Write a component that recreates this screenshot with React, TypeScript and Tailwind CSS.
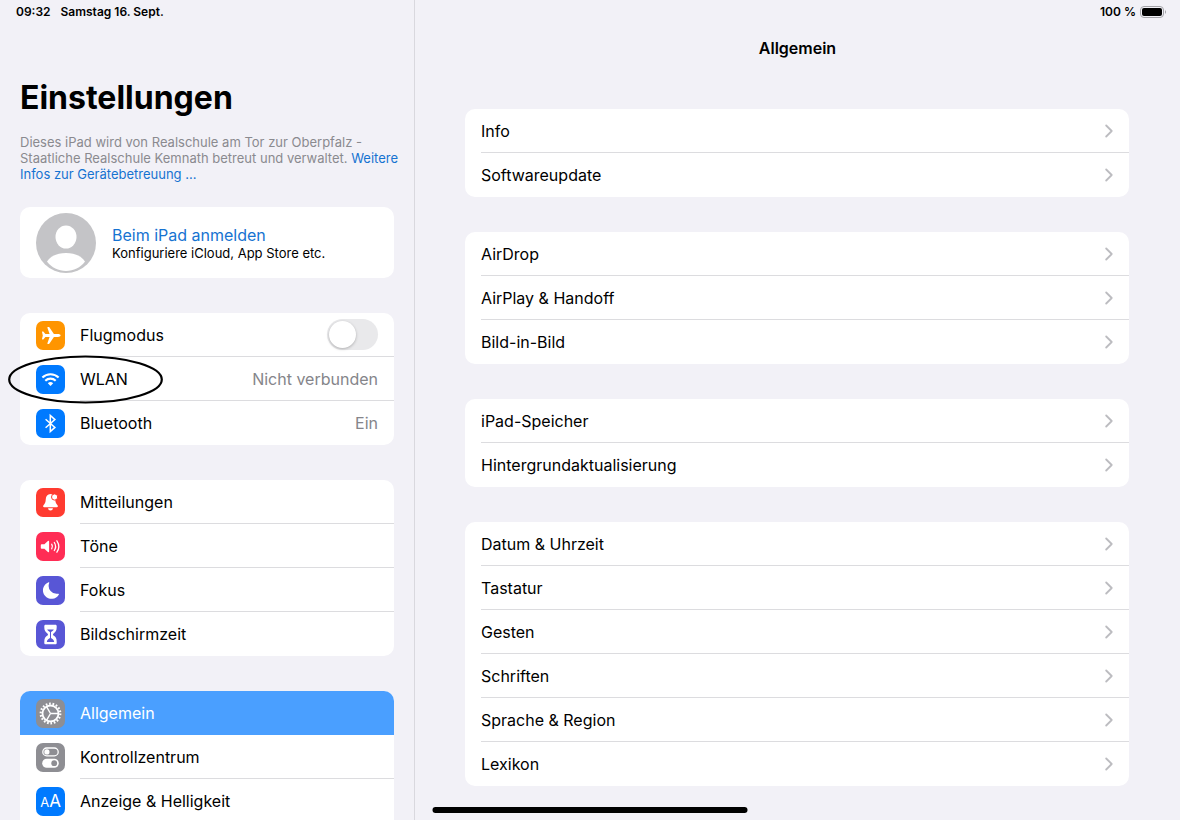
import React, { useState } from "react";

type Option = {
  id: string;
  label: string;
  color: string;
  icon: React.ReactNode;
  value?: string;
  marked?: boolean;
};

const PlaneIcon = () => (
  <svg viewBox="0 0 29 29" className="size-full" fill="#fff" aria-hidden="true">
    <path d="M24.6 14.5c0 .8-1.2 1.4-2.6 1.4h-4.100l-4.400 6.600c-.2.300-.4.400-.7.400h-1c-.3 0-.5-.3-.4-.6l2.200-6.400H9.400l-1.900 2.300c-.2.200-.3.200-.5.200h-.6c-.3 0-.5-.2-.4-.5l.8-3.400-.8-3.400c-.1-.3.100-.5.400-.5H7c.2 0 .3 0 .5.200l1.900 2.300h4.200l-2.200-6.400c-.1-.3.100-.6.400-.6h1c.3 0 .5.100.7.400l4.400 6.600H22c1.400 0 2.600.6 2.600 1.400z" />
  </svg>
);

const WifiIcon = () => (
  <svg viewBox="0 0 29 29" className="size-full" fill="none" stroke="#fff" strokeWidth="2.1" aria-hidden="true">
    <path d="M6.400 12.500a11.600 11.600 0 0 1 16.200 0" />
    <path d="M9.300 15.700a7.500 7.500 0 0 1 10.400 0" />
    <path d="M14.500 21l-2.700-2.700a3.900 3.900 0 0 1 5.400 0z" fill="#fff" stroke="none" />
  </svg>
);

const BluetoothIcon = () => (
  <svg viewBox="0 0 29 29" className="size-full" fill="none" stroke="#fff" strokeWidth="1.5" aria-hidden="true">
    <path d="M9.600 10.200l9.300 8.200-4.600 4.200V6.400l4.600 4.200-9.300 8.200" />
  </svg>
);

const BellIcon = () => (
  <svg viewBox="0 0 29 29" className="size-full" fill="#fff" aria-hidden="true">
    <path d="M14.500 5.900c-3 0-4.500 2.100-4.700 5.100-.2 3.400-.8 4.700-2.300 6.200-.8.900-.4 2 .7 2h12.600c1.100 0 1.500-1.100.7-2-1.500-1.500-2.100-2.800-2.300-6.200-.2-3-1.700-5.100-4.700-5.100z" />
    <circle cx="18.600" cy="9" r="3.100" stroke="#ff3b30" strokeWidth="1" />
    <path d="M12.100 20.200h4.800a2.400 2.300 0 0 1-4.800 0z" />
  </svg>
);

const SpeakerIcon = () => (
  <svg viewBox="0 0 29 29" className="size-full" fill="none" stroke="#fff" strokeWidth="1.3" strokeLinecap="round" aria-hidden="true">
    <path d="M5.600 12.200h2.800l3.500-3.200c.5-.5 1.200-.2 1.200.5v10c0 .7-.7 1-1.200.5l-3.500-3.200H5.600c-.5 0-.8-.3-.8-.8v-3c0-.5.300-.8.800-.8z" fill="#fff" stroke="none" />
    <path d="M15.700 12.200a4.200 4.200 0 0 1 0 4.600" />
    <path d="M18.300 10.500a7.200 7.200 0 0 1 0 8" />
    <path d="M20.900 8.800a10.300 10.300 0 0 1 0 11.400" />
  </svg>
);

const MoonIcon = () => (
  <svg viewBox="0 0 29 29" className="size-full" fill="#fff" aria-hidden="true">
    <path d="M12.600 6.300c.4-.2.800.1.600.6a8.100 8.100 0 0 0 9.100 10.800c.5-.1.800.3.600.7A8.500 8.500 0 1 1 12.600 6.300z" />
  </svg>
);

const HourglassIcon = () => (
  <svg viewBox="0 0 29 29" className="size-full" aria-hidden="true">
    <path
      d="M9.600 4.800h9.800c.8 0 1.300.6 1.300 1.300v1.200c0 3.300-1.100 4.900-3.100 6.100-.8.500-.8 1.700 0 2.200 2 1.200 3.100 2.800 3.100 6.100v1.200c0 .7-.5 1.300-1.300 1.300H9.600c-.8 0-1.300-.6-1.300-1.300v-1.200c0-3.300 1.100-4.900 3.100-6.100.8-.5.800-1.700 0-2.200-2-1.200-3.100-2.800-3.100-6.100V6.100c0-.7.500-1.300 1.300-1.300z"
      fill="#fff"
    />
    <path d="M11.200 9.400h6.600c-.5 1.100-1.400 1.700-2.400 2.300-.3.200-.4.500-.4.900v5.400c1.500.8 2.900 1.900 3.200 3.900h-7.400c.3-2 1.700-3.100 3.200-3.900v-5.400c0-.4-.1-.7-.4-.9-1-.6-1.900-1.200-2.400-2.300z" fill="#5856d6" />
  </svg>
);

const GearIcon = () => (
  <svg viewBox="0 0 29 29" className="size-full" fill="none" stroke="#fff" aria-hidden="true">
    <circle cx="14.500" cy="14.500" r="9.800" strokeWidth="2.200" strokeDasharray="1.700 1.721" />
    <circle cx="14.500" cy="14.500" r="8" strokeWidth="1.800" />
    <path d="M14.500 14.500h8M14.500 14.500l-4-6.900M14.500 14.500l-4 6.900" strokeWidth="1.400" />
  </svg>
);

const SwitchesIcon = () => (
  <svg viewBox="0 0 29 29" className="size-full" aria-hidden="true">
    <rect x="6.800" y="5" width="15.400" height="7.800" rx="3.900" fill="none" stroke="#fff" strokeWidth="1.300" />
    <circle cx="10.900" cy="8.900" r="2.600" fill="#fff" />
    <rect x="6.200" y="15.700" width="16.600" height="9" rx="4.500" fill="#fff" />
    <circle cx="18.200" cy="20.200" r="2.900" fill="#8e8e93" />
  </svg>
);

const LettersIcon = () => (
  <span className="flex items-baseline leading-none text-white">
    <span className="text-[13px]">A</span>
    <span className="text-[17px]">A</span>
  </span>
);

const Chevron = () => (
  <svg viewBox="0 0 8 14" className="h-3.5 w-2 shrink-0" fill="none" stroke="#bcbcc0" strokeWidth="1.800" strokeLinecap="round" strokeLinejoin="round" aria-hidden="true">
    <path d="M1.200 1.500L6.700 7l-5.500 5.500" />
  </svg>
);

const connections: Option[] = [
  { id: "wlan", label: "WLAN", color: "bg-[#007aff]", icon: <WifiIcon />, value: "Nicht verbunden", marked: true },
  { id: "bluetooth", label: "Bluetooth", color: "bg-[#007aff]", icon: <BluetoothIcon />, value: "Ein" },
];

const alerts: Option[] = [
  { id: "mitteilungen", label: "Mitteilungen", color: "bg-[#ff3b30]", icon: <BellIcon /> },
  { id: "toene", label: "Töne", color: "bg-[#ff2d55]", icon: <SpeakerIcon /> },
  { id: "fokus", label: "Fokus", color: "bg-[#5856d6]", icon: <MoonIcon /> },
  { id: "bildschirmzeit", label: "Bildschirmzeit", color: "bg-[#5856d6]", icon: <HourglassIcon /> },
];

const device: Option[] = [
  { id: "allgemein", label: "Allgemein", color: "bg-[#8e8e93]", icon: <GearIcon /> },
  { id: "kontrollzentrum", label: "Kontrollzentrum", color: "bg-[#8e8e93]", icon: <SwitchesIcon /> },
  { id: "anzeige", label: "Anzeige & Helligkeit", color: "bg-[#007aff]", icon: <LettersIcon /> },
];

const generalGroups = [
  ["Info", "Softwareupdate"],
  ["AirDrop", "AirPlay & Handoff", "Bild-in-Bild"],
  ["iPad-Speicher", "Hintergrundaktualisierung"],
  ["Datum & Uhrzeit", "Tastatur", "Gesten", "Schriften", "Sprache & Region", "Lexikon"],
];

const IconTile = ({ color, children }: { color: string; children: React.ReactNode }) => (
  <span className={`flex size-[29px] shrink-0 items-center justify-center rounded-[7px] ${color}`}>
    {children}
  </span>
);

const OptionRow = ({ option, active, onSelect }: { option: Option; active: boolean; onSelect: (id: string) => void }) => (
  <li className="group relative">
    <button
      type="button"
      onClick={() => onSelect(option.id)}
      className={`flex w-full items-center gap-[15px] pl-4 text-left group-first:rounded-t-[10px] group-last:rounded-b-[10px] ${
        active ? "bg-[#4a9fff] text-white" : ""
      }`}
    >
      <IconTile color={option.color}>{option.icon}</IconTile>
      <span
        className={`flex h-11 flex-1 items-center justify-between border-b pr-4 group-last:border-transparent ${
          active ? "border-transparent" : "border-[#dcdcdf]"
        }`}
      >
        <span>{option.label}</span>
        {option.value && <span className="text-[#85858a]">{option.value}</span>}
      </span>
    </button>
    {/* Marker around the entry */}
    {option.marked && (
      <svg
        viewBox="0 0 156 50"
        className="pointer-events-none absolute -left-3 -top-0.5 z-10 h-[50px] w-[156px]"
        fill="none"
        stroke="#000"
        strokeWidth="2.200"
        aria-hidden="true"
      >
        <ellipse cx="77.500" cy="24.500" rx="76.300" ry="23" />
      </svg>
    )}
  </li>
);

const App: React.FC = () => {
  const [selected, setSelected] = useState("allgemein");
  const [flightMode, setFlightMode] = useState(false);

  const renderRows = (options: Option[]) =>
    options.map((option) => (
      <OptionRow key={option.id} option={option} active={selected === option.id} onSelect={setSelected} />
    ));

  return (
    <div className="flex h-screen overflow-hidden bg-[#f2f1f7] font-[Inter,'Liberation_Sans',sans-serif] text-base text-black">
      {/* SIDEBAR */}
      <aside className="w-[415px] shrink-0 overflow-hidden border-r border-[#d9d8de]">
        <div className="flex h-6 items-center gap-2.5 pl-4 text-xs font-semibold">
          <span>09:32</span>
          <span>Samstag 16. Sept.</span>
        </div>

        <div className="px-5 pt-[54px]">
          <h1 className="text-[32px] font-bold leading-10">Einstellungen</h1>
          <p className="-mr-2 mt-4 text-[13px] leading-4 text-[#8a8a8f]">
            Dieses iPad wird von Realschule am Tor zur Oberpfalz - Staatliche Realschule Kemnath betreut und verwaltet.{" "}
            <a href="#betreuung" className="text-[#1673d1]">
              Weitere Infos zur Gerätebetreuung ...
            </a>
          </p>

          <button type="button" className="mt-[25px] flex h-[71px] w-full items-center gap-4 rounded-[10px] bg-white px-4 text-left">
            <svg viewBox="0 0 60 60" className="size-[60px] shrink-0" aria-hidden="true">
              <circle cx="30" cy="30" r="30" fill="#c4c4c7" />
              <ellipse cx="30" cy="24" rx="10.500" ry="11.500" fill="#fff" />
              <path d="M11 48.500C14.500 43 21.500 40 30 40s15.500 3 19 8.500C44.500 54.500 37.500 58 30 58s-14.500-3.500-19-9.500z" fill="#fff" />
            </svg>
            <span className="flex flex-col">
              <span className="leading-5 text-[#1673d1]">Beim iPad anmelden</span>
              <span className="text-[13px] leading-4">Konfiguriere iCloud, App Store etc.</span>
            </span>
          </button>

          <nav className="mt-[35px] flex flex-col gap-[35px]">
            <ul className="rounded-[10px] bg-white">
              <li>
                <label className="flex items-center gap-[15px] pl-4">
                  <IconTile color="bg-[#ff9500]">
                    <PlaneIcon />
                  </IconTile>
                  <span className="flex h-11 flex-1 items-center justify-between border-b border-[#dcdcdf] pr-4">
                    <span>Flugmodus</span>
                    <input
                      type="checkbox"
                      role="switch"
                      checked={flightMode}
                      onChange={(e) => setFlightMode(e.target.checked)}
                      className="flex h-[31px] w-[51px] appearance-none items-center rounded-full bg-[#e9e9eb] p-0.5 before:size-[27px] before:rounded-full before:bg-white before:shadow-[0_1px_3px_rgba(0,0,0,0.25)] checked:justify-end checked:bg-[#34c759]"
                    />
                  </span>
                </label>
              </li>
              {renderRows(connections)}
            </ul>
            <ul className="rounded-[10px] bg-white">{renderRows(alerts)}</ul>
            <ul className="rounded-[10px] bg-white pb-11">{renderRows(device)}</ul>
          </nav>
        </div>
      </aside>

      {/* CONTENT */}
      <main className="min-w-0 flex-1 overflow-hidden">
        <div className="flex h-6 items-center justify-end gap-1 pr-3.5 text-xs font-semibold">
          <span>100 %</span>
          <svg viewBox="0 0 26 12" className="h-3 w-[26px]" aria-hidden="true">
            <rect x="0.500" y="0.500" width="23" height="11" rx="3.500" fill="none" stroke="#a3a3a8" />
            <rect x="2" y="2" width="20" height="8" rx="2" fill="#000" />
            <path d="M25 4.200c.8.300 1 1 1 1.800s-.2 1.500-1 1.800z" fill="#a3a3a8" />
          </svg>
        </div>
        <h2 className="pt-3 text-center font-semibold leading-6">Allgemein</h2>

        <div className="mt-[49px] flex flex-col gap-[35px] pl-[50px] pr-[51px]">
          {generalGroups.map((group) => (
            <ul key={group[0]} className="rounded-[10px] bg-white">
              {group.map((label) => (
                <li key={label} className="group pl-4">
                  <button
                    type="button"
                    className="flex h-11 w-full items-center justify-between border-b border-[#dcdcdf] pr-4 text-left group-last:border-transparent"
                  >
                    <span>{label}</span>
                    <Chevron />
                  </button>
                </li>
              ))}
            </ul>
          ))}
        </div>
      </main>

      {/* HOME INDICATOR */}
      <div className="fixed bottom-[7px] left-1/2 h-1.5 w-[315px] -translate-x-1/2 rounded-full bg-black" />
    </div>
  );
};

export default App;
